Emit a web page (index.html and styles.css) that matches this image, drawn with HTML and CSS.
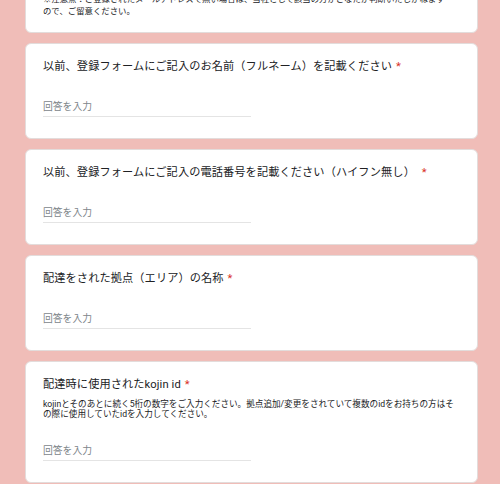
FILE: index.html
```html
<!DOCTYPE html>
<html lang="ja">
<head>
<meta charset="utf-8">
<title>フォーム</title>
<link rel="stylesheet" href="styles.css">
</head>
<body>
<div class="page">
  <div class="card card-top">
    <p class="desc desc-top">※注意点：ご登録されたメールアドレスで無い場合は、当社として該当の方がどなたか判断いたしかねます<br>ので、ご留意ください。</p>
  </div>

  <div class="card">
    <div class="title">以前、登録フォームにご記入のお名前（フルネーム）を記載ください<span class="req">*</span></div>
    <div class="answer">回答を入力</div>
  </div>

  <div class="card">
    <div class="title">以前、登録フォームにご記入の電話番号を記載ください（ハイフン無し） <span class="req">*</span></div>
    <div class="answer">回答を入力</div>
  </div>

  <div class="card">
    <div class="title">配達をされた拠点（エリア）の名称<span class="req">*</span></div>
    <div class="answer">回答を入力</div>
  </div>

  <div class="card">
    <div class="title">配達時に使用されたkojin id<span class="req">*</span></div>
    <p class="desc desc-q">kojinとそのあとに続く5桁の数字をご入力ください。拠点追加/変更をされていて複数のidをお持ちの方はその際に使用していたidを入力してください。</p>
    <div class="answer answer-after-desc">回答を入力</div>
  </div>
</div>
</body>
</html>
```

FILE: styles.css
```css
html, body {
  margin: 0;
  padding: 0;
}

body {
  background: #f0bdb8;
  font-family: Roboto, "Noto Sans CJK JP", "Noto Sans", sans-serif;
  color: #202124;
  overflow: hidden;
}

.page {
  display: flex;
  flex-direction: column;
  gap: 10px;
  margin: -24px 22px 0 25px;
}

.card {
  background: #ffffff;
  border: 1px solid #e3dcdb;
  border-radius: 6px;
  padding: 16px 17px 21px 17px;
}

.card-top {
  padding-bottom: 15px;
}

.desc {
  margin: 0;
  font-size: 8.6px;
  line-height: 10px;
  color: #202124;
}

.desc-top {
  font-size: 8.4px;
  line-height: 12px;
}

.desc-q {
  margin-top: 7px;
}

.title {
  font-size: 11.2px;
  line-height: 14px;
  letter-spacing: 0.1px;
  color: #202124;
  white-space: nowrap;
}

.req {
  color: #d93025;
  margin-left: 4px;
}

.answer {
  width: 208px;
  margin-top: 26px;
  font-size: 9.8px;
  line-height: 14px;
  padding-bottom: 2px;
  color: #80868b;
  border-bottom: 1px solid #e4e4e4;
}

.answer-after-desc {
  margin-top: 25px;
}
```
